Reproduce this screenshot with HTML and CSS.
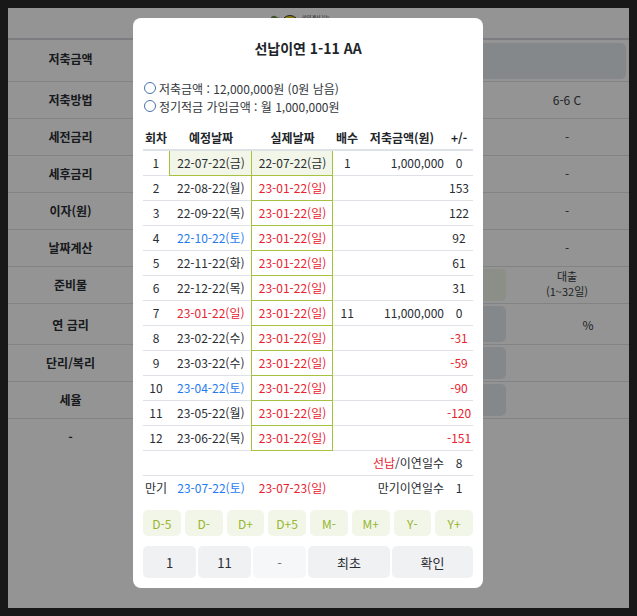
FILE: index.html
```html
<!DOCTYPE html>
<html lang="ko">
<head>
<meta charset="utf-8">
<title>선납이연</title>
<link rel="stylesheet" href="styles.css">
</head>
<body>
<div class="page">
  <header class="top">
    <svg class="logo-mark" width="30" height="16" viewBox="0 0 30 16"><circle cx="5" cy="6" r="3.2" fill="#6f8f4a"/><circle cx="9" cy="7" r="2.6" fill="#a3553f"/><circle cx="21" cy="11" r="8.5" fill="#f2d21c" stroke="#333" stroke-width="1"/></svg>
    <span class="logo-text">만약계산기는</span>
  </header>
  <div class="row first-row"><div class="label">저축금액</div><div class="field wide"></div></div>
  <div class="row"><div class="label">저축방법</div><div class="mid"></div><div class="val">6-6 C</div></div>
  <div class="row"><div class="label">세전금리</div><div class="mid"></div><div class="val">-</div></div>
  <div class="row"><div class="label">세후금리</div><div class="mid"></div><div class="val">-</div></div>
  <div class="row"><div class="label">이자(원)</div><div class="mid"></div><div class="val">-</div></div>
  <div class="row"><div class="label">날짜계산</div><div class="mid"></div><div class="val">-</div></div>
  <div class="row"><div class="label">준비물</div><div class="mid"><div class="field green"></div></div><div class="val small">대출<br>(1~32일)</div></div>
  <div class="row tall"><div class="label">연 금리</div><div class="mid"><div class="field"></div></div><div class="val pct">%</div></div>
  <div class="row"><div class="label">단리/복리</div><div class="mid"><div class="field"></div></div><div class="val"></div></div>
  <div class="row"><div class="label">세율</div><div class="mid"><div class="field"></div></div><div class="val"></div></div>
  <div class="row last"><div class="label">-</div></div>
  <div class="backdrop"></div>
  <section class="modal">
    <h2 class="title">선납이연 1-11 AA</h2>
    <div class="info">
      <div class="info-line"><i class="dot"></i>저축금액 : 12,000,000원 (0원 남음)</div>
      <div class="info-line"><i class="dot"></i>정기적금 가입금액 : 월 1,000,000원</div>
    </div>
    <table class="sched">
      <colgroup><col class="c1"><col class="c2"><col class="c3"><col class="c4"><col class="c5"><col class="c6"></colgroup>
      <thead><tr><th>회차</th><th class="date">예정날짜</th><th class="date">실제날짜</th><th>배수</th><th class="th-amt">저축금액(원)</th><th class="diff">+/-</th></tr></thead>
      <tbody>
        <tr class="first"><td>1</td><td class="date plan">22-07-22(금)</td><td class="date act">22-07-22(금)</td><td>1</td><td class="amt">1,000,000</td><td class="diff">0</td></tr>
        <tr><td>2</td><td class="date">22-08-22(월)</td><td class="date act red">23-01-22(일)</td><td></td><td></td><td class="diff">153</td></tr>
        <tr><td>3</td><td class="date">22-09-22(목)</td><td class="date act red">23-01-22(일)</td><td></td><td></td><td class="diff">122</td></tr>
        <tr><td>4</td><td class="date blue">22-10-22(토)</td><td class="date act red">23-01-22(일)</td><td></td><td></td><td class="diff">92</td></tr>
        <tr><td>5</td><td class="date">22-11-22(화)</td><td class="date act red">23-01-22(일)</td><td></td><td></td><td class="diff">61</td></tr>
        <tr><td>6</td><td class="date">22-12-22(목)</td><td class="date act red">23-01-22(일)</td><td></td><td></td><td class="diff">31</td></tr>
        <tr><td>7</td><td class="date red">23-01-22(일)</td><td class="date act red">23-01-22(일)</td><td>11</td><td class="amt">11,000,000</td><td class="diff">0</td></tr>
        <tr><td>8</td><td class="date">23-02-22(수)</td><td class="date act red">23-01-22(일)</td><td></td><td></td><td class="diff red">-31</td></tr>
        <tr><td>9</td><td class="date">23-03-22(수)</td><td class="date act red">23-01-22(일)</td><td></td><td></td><td class="diff red">-59</td></tr>
        <tr><td>10</td><td class="date blue">23-04-22(토)</td><td class="date act red">23-01-22(일)</td><td></td><td></td><td class="diff red">-90</td></tr>
        <tr><td>11</td><td class="date">23-05-22(월)</td><td class="date act red">23-01-22(일)</td><td></td><td></td><td class="diff red">-120</td></tr>
        <tr class="final"><td>12</td><td class="date">23-06-22(목)</td><td class="date act red">23-01-22(일)</td><td></td><td></td><td class="diff red">-151</td></tr>
        <tr><td colspan="5" class="amt"><span class="red">선납</span>/이연일수</td><td class="diff">8</td></tr>
        <tr class="plain"><td>만기</td><td class="date blue">23-07-22(토)</td><td class="date red">23-07-23(일)</td><td colspan="2" class="amt">만기이연일수</td><td class="diff">1</td></tr>
      </tbody>
    </table>
    <div class="steps">
      <button class="step">D-5</button><button class="step">D-</button><button class="step">D+</button><button class="step">D+5</button><button class="step">M-</button><button class="step">M+</button><button class="step">Y-</button><button class="step">Y+</button>
    </div>
    <div class="actions">
      <button class="act-btn">1</button><button class="act-btn">11</button><button class="act-btn off">-</button><button class="act-btn">최초</button><button class="act-btn">확인</button>
    </div>
  </section>
</div>
</body>
</html>
```
FILE: styles.css
```css
* { box-sizing: border-box; }
html { background: #181818; }
body {
  margin: 8px;
  font-family: "Noto Sans CJK KR", "Noto Sans", sans-serif;
  font-size: 12px;
  color: #212529;
}
.page {
  position: relative;
  width: 621px;
  height: 600px;
  background: #fff;
  overflow: hidden;
}
.top {
  display: flex;
  justify-content: center;
  align-items: flex-start;
  gap: 3px;
  height: 32px;
  padding: 5px 38px 0 0;
  border-bottom: 2px solid #d4d8dc;
}
.logo-mark { display: block; }
.logo-text { font-size: 5px; line-height: 7px; color: #333; }
.row {
  display: grid;
  grid-template-columns: 125px 373px 122px;
  align-items: center;
  height: 37px;
  border-bottom: 1px solid #dee2e6;
}
.row.first-row { height: 42px; }
.label, .val { padding-bottom: 2px; }
.row.first-row .label { padding-bottom: 4px; }
.row.tall { height: 41px; }
.row.tall .label, .row.tall .val { padding-bottom: 0; }
.row.last { border-bottom: 0; }
.label {
  text-align: center;
  font-weight: 700;
  color: #2a2d33;
}
.mid { height: 100%; padding: 2px 0; }
.field {
  height: 100%;
  background: #e6ebef;
  border-radius: 5px;
}
.field.wide { grid-column: 2 / 4; height: 36px; margin-right: 2px; }
.field.green { background: #f1f6e8; }
.val { text-align: center; color: #3a3d42; }
.val.small { font-size: 11px; line-height: 15px; }
.val.pct { padding-left: 42px; }
.backdrop {
  position: absolute;
  inset: 0;
  background: rgba(0, 0, 0, 0.42);
}
.modal {
  position: absolute;
  left: 125px;
  top: 10px;
  width: 350px;
  height: 570px;
  padding: 0 10px;
  background: #fff;
  border-radius: 8px;
}
.title {
  margin: 0;
  padding-top: 20px;
  height: 57px;
  line-height: 20px;
  font-size: 14px;
  font-weight: 700;
  text-align: center;
  color: #212529;
}
.info { height: 51px; padding-top: 4px; color: #33373c; }
.info-line {
  display: flex;
  align-items: center;
  height: 18px;
  gap: 3px;
}
.dot {
  flex: none;
  width: 12px;
  height: 12px;
  margin-left: 1px;
  border: 1px solid #4a72b0;
  border-radius: 50%;
}
.sched {
  width: 330px;
  table-layout: fixed;
  border-collapse: collapse;
}
.c1 { width: 26px; }
.c2 { width: 82px; }
.c3 { width: 81px; }
.c4 { width: 30px; }
.c5 { width: 85px; }
.c6 { width: 26px; }
.sched th {
  height: 24px;
  padding: 0;
  font-weight: 700;
  text-align: center;
  color: #212529;
  border-bottom: 2px solid #dee2e6;
}
.sched td {
  height: 25px;
  padding: 0;
  text-align: center;
  white-space: nowrap;
  color: #2a2d33;
  border-top: 1px solid #dee2e6;
}
.sched th.date, .sched td.date { padding-left: 2px; }
.sched th.th-amt { padding-right: 5px; }
.sched th.diff, .sched td.diff { padding-right: 2px; }
.sched td.amt { text-align: right; padding-right: 3px; }
.sched td.red, .sched .red { color: #e8222f; }
.sched td.blue { color: #1f7cf0; }
.sched td.act {
  border: 1px solid #a6c23f;
}
.sched td.plan {
  background: #f2f6e8;
  border-left: 1px solid #a6c23f;
  border-bottom: 1px solid #a6c23f;
}
.sched .first td { border-top: 0; }
.sched .first td.act { background: #f2f6e8; }
.steps {
  display: flex;
  gap: 4px;
  margin-top: 10px;
}
.step {
  flex: 1;
  height: 26px;
  padding: 0;
  border: 0;
  border-radius: 5px;
  background: #f2f6e8;
  color: #97b52f;
  font: inherit;
}
.actions {
  display: grid;
  grid-template-columns: 53px 53px 53px 82px 81px;
  gap: 2px;
  margin-top: 10px;
}
.act-btn {
  height: 32px;
  padding: 0;
  border: 0;
  border-radius: 5px;
  background: #f0f1f3;
  color: #2a2d33;
  font: inherit;
  font-size: 13px;
}
.act-btn.off { background: #f6f7f8; color: #6c757d; }
```
